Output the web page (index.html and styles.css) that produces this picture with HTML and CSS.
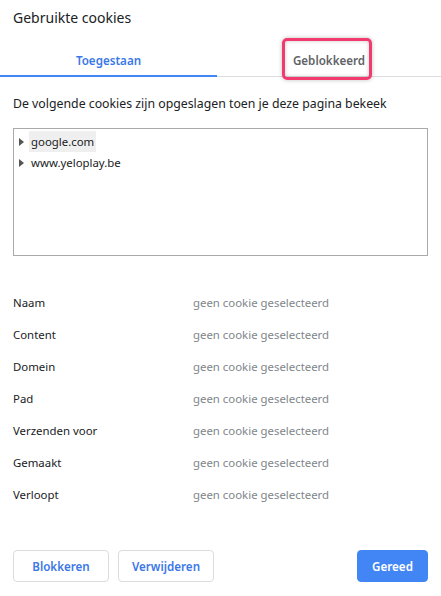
FILE: index.html
```html
<!DOCTYPE html>
<html lang="nl">
<head>
<meta charset="utf-8">
<link rel="stylesheet" href="styles.css">
</head>
<body>
<div class="dialog">
  <h1 class="title">Gebruikte cookies</h1>
  <div class="tabs">
    <div class="tab active">Toegestaan</div>
    <div class="tab">Geblokkeerd<span class="highlight"></span></div>
  </div>
  <p class="desc">De volgende cookies zijn opgeslagen toen je deze pagina bekeek</p>
  <div class="tree">
    <div class="node"><span class="arrow"></span><span class="label selected">google.com</span></div>
    <div class="node"><span class="arrow"></span><span class="label">www.yeloplay.be</span></div>
  </div>
  <div class="details">
    <div class="row"><span class="key">Naam</span><span class="val">geen cookie geselecteerd</span></div>
    <div class="row"><span class="key">Content</span><span class="val">geen cookie geselecteerd</span></div>
    <div class="row"><span class="key">Domein</span><span class="val">geen cookie geselecteerd</span></div>
    <div class="row"><span class="key">Pad</span><span class="val">geen cookie geselecteerd</span></div>
    <div class="row"><span class="key">Verzenden voor</span><span class="val">geen cookie geselecteerd</span></div>
    <div class="row"><span class="key">Gemaakt</span><span class="val">geen cookie geselecteerd</span></div>
    <div class="row"><span class="key">Verloopt</span><span class="val">geen cookie geselecteerd</span></div>
  </div>
  <div class="buttons">
    <button class="btn">Blokkeren</button>
    <button class="btn">Verwijderen</button>
    <span class="spacer"></span>
    <button class="btn primary">Gereed</button>
  </div>
</div>
</body>
</html>
```
FILE: styles.css
```css
html, body {
  margin: 0;
  padding: 0;
  background: #fff;
}
body {
  font-family: "Noto Sans", "Open Sans", sans-serif;
  font-size: 11.4px;
  color: #202124;
  width: 441px;
  height: 596px;
  overflow: hidden;
}
.dialog {
  display: flex;
  flex-direction: column;
}
.title {
  margin: 0;
  padding: 8px 13px 0;
  font-size: 14px;
  font-weight: 400;
  line-height: 20px;
  color: #202124;
}
.tabs {
  display: grid;
  grid-template-columns: 217px 1fr;
  margin-top: 22px;
  border-bottom: 1px solid #dadce0;
}
.tab {
  position: relative;
  box-sizing: border-box;
  text-align: center;
  font-size: 11.6px;
  font-weight: 600;
  color: #5f6368;
  height: 26px;
  line-height: 18px;
  padding-top: 2px;
}
.tab.active {
  color: #3b78e7;
  border-bottom: 2px solid #4285f4;
  margin-bottom: -1px;
  height: 27px;
}
.highlight {
  position: absolute;
  left: 65px;
  top: -12px;
  width: 90px;
  height: 42px;
  box-sizing: border-box;
  border: 3px solid #f23a6e;
  border-radius: 5px;
  box-shadow: 0 0 4px rgba(0,0,0,0.25), inset 0 0 4px rgba(0,0,0,0.2);
}
.desc {
  margin: 18px 13px 0;
  font-size: 12.3px;
  line-height: 18px;
}
.tree {
  margin: 15px 13px 0;
  height: 124px;
  border: 1px solid #a9a9a9;
  padding-top: 2px;
}
.node {
  display: flex;
  align-items: center;
  height: 21px;
  padding-left: 5px;
}
.arrow {
  width: 0;
  height: 0;
  border-top: 4px solid transparent;
  border-bottom: 4px solid transparent;
  border-left: 5px solid #555;
  margin-right: 5px;
}
.label {
  padding: 1px 2px;
  line-height: 19px;
}
.label.selected {
  background: #efefef;
}
.details {
  margin: 31px 13px 0;
  display: flex;
  flex-direction: column;
}
.row {
  display: grid;
  grid-template-columns: 180px 1fr;
  line-height: 32px;
  height: 32px;
}
.val {
  color: #80868b;
}
.buttons {
  display: flex;
  gap: 9px;
  margin: 39px 13px 0;
}
.spacer {
  flex: 1;
}
.btn {
  font-family: inherit;
  font-size: 11.6px;
  font-weight: 600;
  height: 32px;
  width: 96px;
  border: 1px solid #dadce0;
  border-radius: 4px;
  background: #fff;
  color: #3b78e7;
  padding: 0;
}
.btn.primary {
  width: 71px;
  background: #4285f4;
  border-color: #4285f4;
  color: #fff;
}
```
